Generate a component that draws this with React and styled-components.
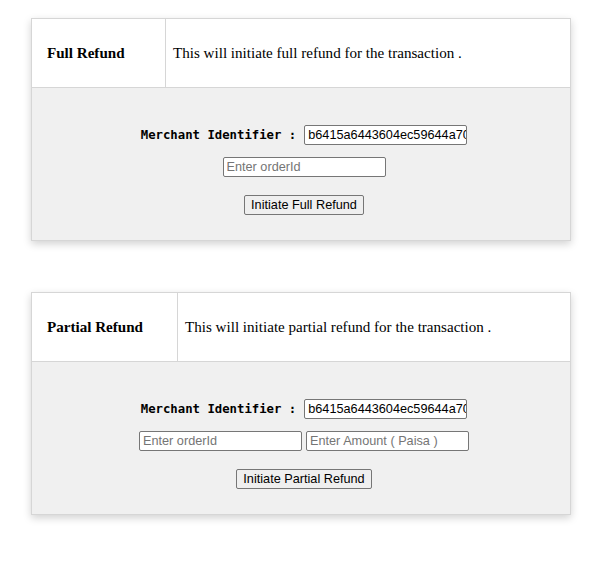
import React from "react";
import styled, { createGlobalStyle } from "styled-components";

const Global = createGlobalStyle`
  html, body { margin: 0; padding: 0; background: #fff; }
  body { font-family: "Liberation Serif", "Times New Roman", serif; }
`;

const Page = styled.div`
  padding: 18px 37px 40px 31px;
  display: flex;
  flex-direction: column;
  gap: 51px;
`;

const Card = styled.section`
  width: 540px;
  box-sizing: border-box;
  border: 1px solid #d6d6d6;
  box-shadow: 0 3px 8px rgba(0, 0, 0, 0.18);
  background: #fff;
`;

const Header = styled.div`
  display: flex;
  height: 68px;
  border-bottom: 1px solid #d6d6d6;
`;

const TitleCell = styled.div`
  width: ${(p) => p.$w}px;
  box-sizing: border-box;
  padding-left: 15px;
  border-right: 1px solid #d6d6d6;
  display: flex;
  align-items: center;
  font-weight: bold;
  font-size: 15.1px;
  color: #000;
`;

const DescCell = styled.div`
  flex: 1;
  padding-left: 7px;
  display: flex;
  align-items: center;
  font-size: 15.1px;
  color: #000;
`;

const Body = styled.div`
  background: #f0f0f0;
  display: flex;
  flex-direction: column;
  align-items: center;
  padding: 37px 0 25px 6px;
`;

const Row = styled.div`
  display: flex;
  align-items: center;
  justify-content: center;
  gap: ${(p) => p.$gap || 4}px;
  margin-bottom: ${(p) => p.$mb || 0}px;
`;

const Label = styled.label`
  font-family: "DejaVu Sans Mono", "Liberation Mono", monospace;
  font-weight: bold;
  font-size: 12.3px;
  color: #000;
`;

const Input = styled.input`
  width: 163px;
  height: 20px;
  box-sizing: border-box;
  border: 1px solid #767676;
  border-radius: 2px;
  padding: 1px 0 1px 3px;
  font-family: "Liberation Sans", Arial, sans-serif;
  font-size: 12.7px;
  color: #000;
  background: #fff;
  outline: none;
  &::placeholder { color: #757575; }
`;

const Button = styled.button`
  height: 20px;
  box-sizing: border-box;
  border: 1px solid #767676;
  border-radius: 2px;
  background: #efefef;
  padding: 0 6px;
  font-family: "Liberation Sans", Arial, sans-serif;
  font-size: 12.7px;
  color: #000;
  line-height: 1;
`;

function RefundCard({ title, desc, titleWidth, partial, buttonText }) {
  return (
    <Card>
      <Header>
        <TitleCell $w={titleWidth}>{title}</TitleCell>
        <DescCell>{desc}</DescCell>
      </Header>
      <Body>
        <Row $gap={8} $mb={12}>
          <Label>Merchant Identifier :</Label>
          <Input defaultValue="b6415a6443604ec59644a70c" readOnly />
        </Row>
        <Row $mb={18}>
          <Input placeholder="Enter orderId" />
          {partial && <Input placeholder="Enter Amount ( Paisa )" />}
        </Row>
        <Button>{buttonText}</Button>
      </Body>
    </Card>
  );
}

export default function App() {
  return (
    <>
      <Global />
      <Page>
        <RefundCard
          title="Full Refund"
          desc="This will initiate full refund for the transaction ."
          titleWidth={134}
          buttonText="Initiate Full Refund"
        />
        <RefundCard
          title="Partial Refund"
          desc="This will initiate partial refund for the transaction ."
          titleWidth={146}
          partial
          buttonText="Initiate Partial Refund"
        />
      </Page>
    </>
  );
}
